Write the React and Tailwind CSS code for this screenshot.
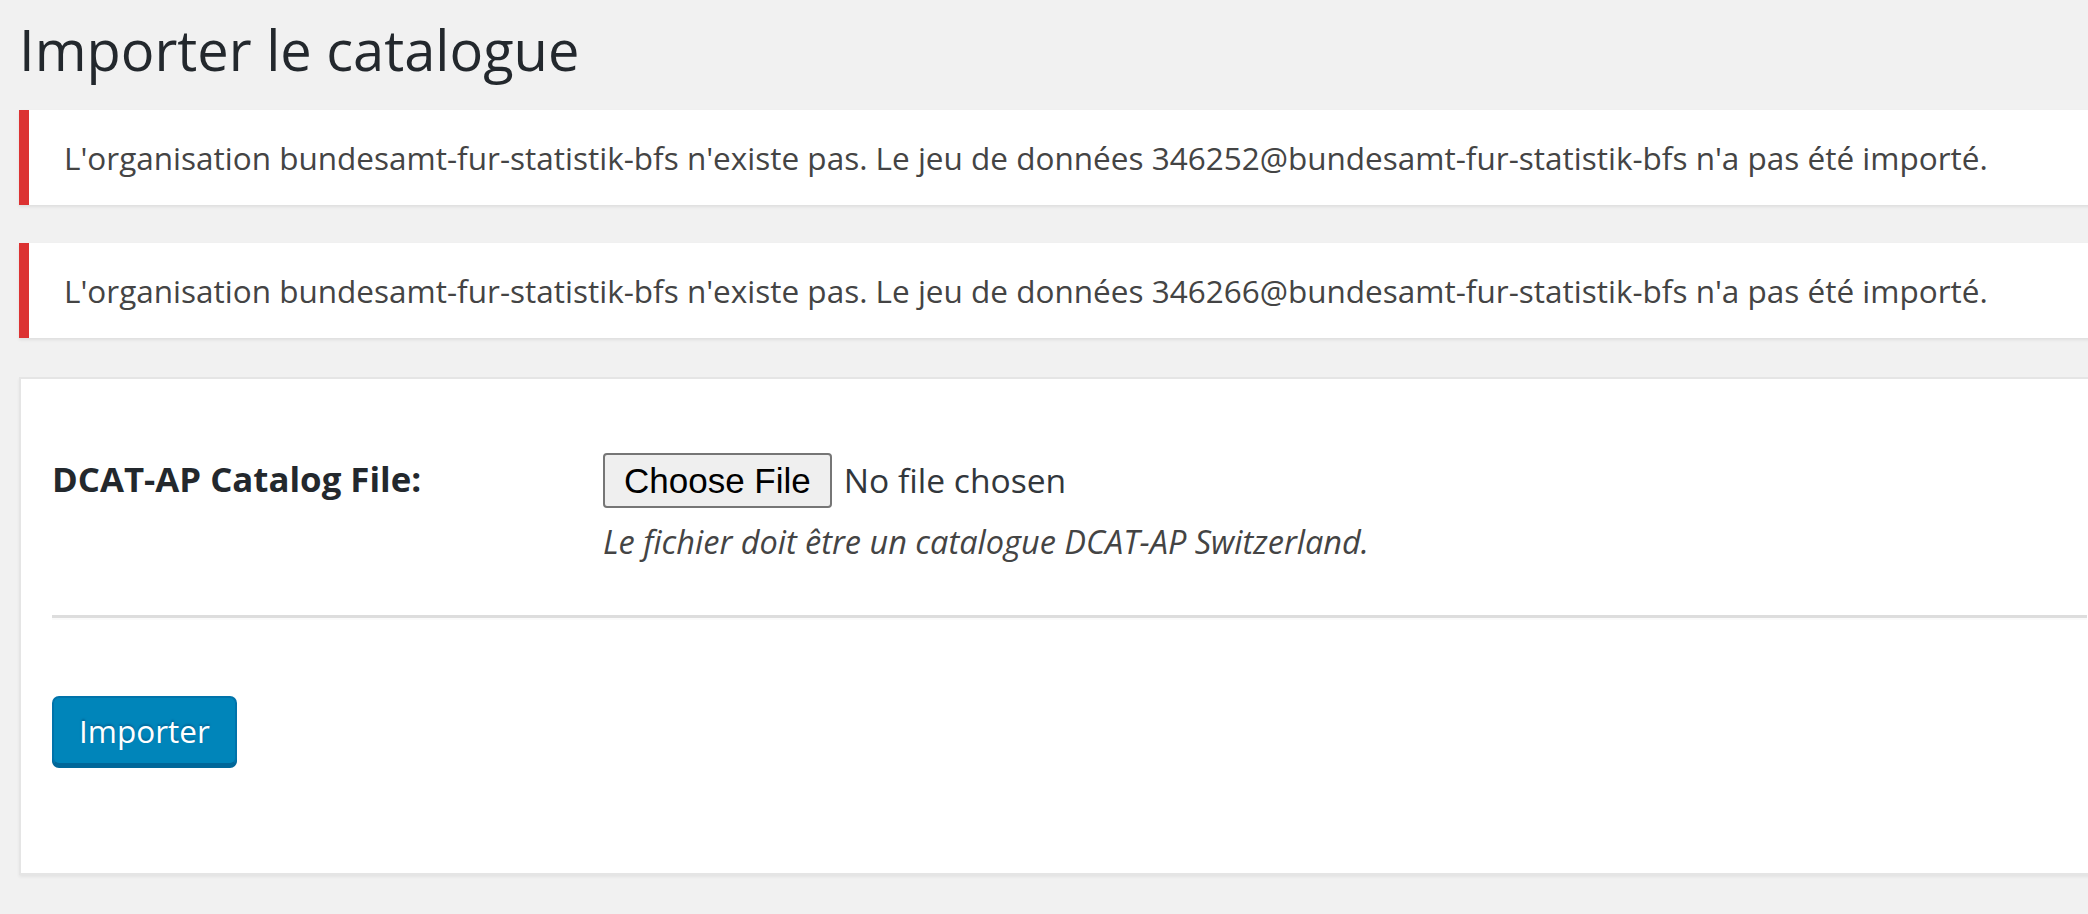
function Notice({ children }) {
  return (
    <div className="-mr-8 h-[95px] flex items-center bg-white border-l-[10px] border-[#dc3232] shadow-[0_2px_3px_rgba(0,0,0,0.08)] pl-[35px]">
      <p className="text-[31.5px] text-[#444]">{children}</p>
    </div>
  );
}

export default function App() {
  return (
    <div
      className="min-h-screen bg-[#f1f1f1] overflow-hidden pl-[19px] text-[#444]"
      style={{ fontFamily: '"Open Sans", "Noto Sans", sans-serif' }}
    >
      <h1 className="text-[56px] leading-[74px] text-[#23282d] pt-[12px] pb-[24px]">Importer le catalogue</h1>

      <Notice>
        L'organisation bundesamt-fur-statistik-bfs n'existe pas. Le jeu de données 346252@bundesamt-fur-statistik-bfs n'a pas été importé.
      </Notice>
      <div className="h-[38px]" />
      <Notice>
        L'organisation bundesamt-fur-statistik-bfs n'existe pas. Le jeu de données 346266@bundesamt-fur-statistik-bfs n'a pas été importé.
      </Notice>

      <div className="-mr-8 mt-[39px] h-[498px] bg-white border-2 border-[#e5e5e5] shadow-[0_2px_3px_rgba(0,0,0,0.06)] px-[31px] pt-[74px]">
        <div className="flex items-start">
          <div className="w-[551px] text-[34.8px] font-bold text-[#23282d]">DCAT-AP Catalog File:</div>
          <div>
            <div className="flex items-center gap-[12px]">
              <button
                className="h-[55px] px-[19px] bg-[#efefef] border-2 border-[#767676] rounded-[4px] text-[35px] leading-none text-black"
                style={{ fontFamily: '"Liberation Sans", Arial, sans-serif' }}
              >
                Choose File
              </button>
              <span className="text-[33.6px] text-[#32373c]">No file chosen</span>
            </div>
            <p className="mt-[10px] text-[32.5px] italic text-[#444]">
              Le fichier doit être un catalogue DCAT-AP Switzerland.
            </p>
          </div>
        </div>

        <div className="mt-[48px] border-t-[3px] border-t-[#dddddd] border-b-[2px] border-b-[#fafafa]" />

        <button className="mt-[76px] h-[69px] px-[25px] bg-[#0085ba] border-2 border-[#0073aa] border-b-[#006799] rounded-[7px] shadow-[0_3px_0_#006799] text-[31.5px] text-white [text-shadow:0_-2px_2px_#006799]">
          Importer
        </button>
      </div>
    </div>
  );
}
